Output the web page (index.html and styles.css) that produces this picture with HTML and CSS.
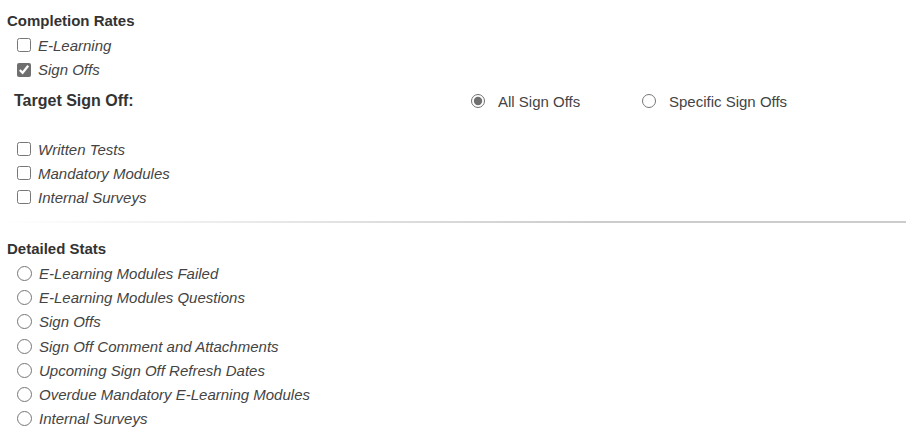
FILE: index.html
```html
<!DOCTYPE html>
<html lang="en">
<head>
    <meta charset="UTF-8">
    <meta name="viewport" content="width=device-width, initial-scale=1.0">
    <title>Report Options</title>
    <link rel="stylesheet" href="styles.css">
</head>
<body>

    <form class="report-form">
        <h3 class="section-title">Completion Rates</h3>
        <div class="option-list">
            <label class="option"><input type="checkbox" name="elearning"> E-Learning</label>
            <label class="option"><input type="checkbox" name="signoffs" checked> Sign Offs</label>
        </div>

        <div class="target-row">
            <span class="target-label">Target Sign Off:</span>
            <label class="target-option"><input type="radio" name="target" value="all" checked> All Sign Offs</label>
            <label class="target-option"><input type="radio" name="target" value="specific"> Specific Sign Offs</label>
        </div>

        <div class="option-list compact">
            <label class="option"><input type="checkbox" name="tests"> Written Tests</label>
            <label class="option"><input type="checkbox" name="mandatory"> Mandatory Modules</label>
            <label class="option"><input type="checkbox" name="surveys"> Internal Surveys</label>
        </div>

        <hr class="divider">

        <h3 class="section-title">Detailed Stats</h3>
        <div class="option-list stats">
            <label class="option"><input type="radio" name="stats"> E-Learning Modules Failed</label>
            <label class="option"><input type="radio" name="stats"> E-Learning Modules Questions</label>
            <label class="option"><input type="radio" name="stats"> Sign Offs</label>
            <label class="option"><input type="radio" name="stats"> Sign Off Comment and Attachments</label>
            <label class="option"><input type="radio" name="stats"> Upcoming Sign Off Refresh Dates</label>
            <label class="option"><input type="radio" name="stats"> Overdue Mandatory E-Learning Modules</label>
            <label class="option"><input type="radio" name="stats"> Internal Surveys</label>
        </div>
    </form>

</body>
</html>
```

FILE: styles.css
```css
body {
    font-family: "Liberation Sans", Arial, sans-serif;
    color: #333;
    background: #fff;
    margin: 0;
    padding: 0;
}
.report-form {
    padding: 12px 0 0 7px;
}
.section-title {
    font-size: 15px;
    font-weight: bold;
    line-height: 18px;
    margin: 0;
    color: #333;
}
.option-list {
    display: flex;
    flex-direction: column;
    padding-left: 10px;
    margin-top: 3px;
}
.option {
    display: flex;
    align-items: center;
    gap: 7px;
    height: 24.5px;
    font-size: 15px;
    font-style: italic;
    color: #444;
}
.compact .option {
    height: 24px;
}
.stats .option {
    height: 24.3px;
}
input[type="checkbox"],
input[type="radio"] {
    margin: 0;
    width: 14px;
    height: 14px;
    accent-color: #6f6f6f;
}
.stats input[type="radio"] {
    width: 15px;
    height: 15px;
}
.target-row {
    display: flex;
    align-items: center;
    height: 38px;
    padding-left: 7px;
    margin-bottom: 17px;
}
.target-label {
    flex: 0 0 457px;
    font-size: 16px;
    font-weight: bold;
    color: #333;
}
.target-option {
    flex: 0 0 171px;
    display: flex;
    align-items: center;
    gap: 13px;
    font-size: 15px;
    color: #444;
}
.divider {
    border: 0;
    height: 2px;
    margin: 12px 0 0 -7px;
    background: linear-gradient(to right, rgba(204, 204, 204, 0), #ccc 66%);
}
.divider + .section-title {
    margin-top: 17px;
}
```
